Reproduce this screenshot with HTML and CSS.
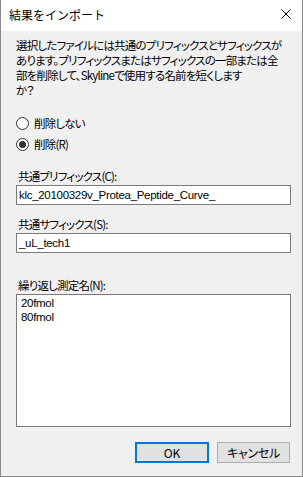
FILE: index.html
```html
<!DOCTYPE html>
<html lang="ja">
<head>
  <meta charset="UTF-8">
  <title>結果をインポート</title>
  <link rel="stylesheet" href="styles.css">
</head>
<body>
  <div class="window">
    <div class="titlebar">
      <span class="title">結果をインポート</span>
      <svg class="close" width="10" height="10" viewBox="0 0 10 10">
        <path d="M0.5 0.5 L9.5 9.5 M9.5 0.5 L0.5 9.5" stroke="#000" stroke-width="1" fill="none"/>
      </svg>
    </div>

    <div class="content">
      <div class="message">
        <span>選択したファイルには共通のプリフィックスとサフィックスが</span>
        <span>あります。プリフィックスまたはサフィックスの一部または全</span>
        <span>部を削除して、Skylineで使用する名前を短くします</span>
        <span>か？</span>
      </div>

      <div class="radios">
        <label class="radio"><span class="dot"></span>削除しない</label>
        <label class="radio checked"><span class="dot"></span>削除(R)</label>
      </div>

      <div class="field prefix">
        <div class="label">共通プリフィックス(C):</div>
        <div class="textbox">klc_20100329v_Protea_Peptide_Curve_</div>
      </div>

      <div class="field suffix">
        <div class="label">共通サフィックス(S):</div>
        <div class="textbox">_uL_tech1</div>
      </div>

      <div class="field replicates">
        <div class="label">繰り返し測定名(N):</div>
        <div class="listbox">
          <div>20fmol</div>
          <div>80fmol</div>
        </div>
      </div>

      <div class="buttons">
        <button class="btn default">OK</button>
        <button class="btn">キャンセル</button>
      </div>
    </div>
  </div>
</body>
</html>
```

FILE: styles.css
```css
body {
  margin: 0;
  font-family: "Noto Sans CJK JP", "Liberation Sans", sans-serif;
  font-size: 12px;
  color: #000;
  background: #fff;
}

.window {
  width: 303px;
  height: 477px;
  box-sizing: border-box;
  border: 1px solid #8a8a8a;
  border-top: none;
  display: flex;
  flex-direction: column;
  background: #f0f0f0;
}

.titlebar {
  height: 31px;
  background: #fff;
  display: flex;
  align-items: center;
  justify-content: space-between;
  padding: 0 11px 0 8px;
  flex-shrink: 0;
}

.title {
  line-height: 16px;
  margin-top: -1px;
}

.close {
  margin-top: -3px;
}

.content {
  display: flex;
  flex-direction: column;
  padding: 0 12px 0 15px;
  font-size: 11.5px;
  letter-spacing: -0.8px;
  font-feature-settings: "palt";
}

.message {
  margin-top: 7px;
  line-height: 15px;
}

.message span {
  display: block;
  white-space: nowrap;
}

.radios {
  margin-top: 18px;
  display: flex;
  flex-direction: column;
  gap: 7px;
}

.radio {
  display: flex;
  align-items: center;
  height: 14px;
  line-height: 14px;
}

.dot {
  width: 11px;
  height: 11px;
  border: 1px solid #333;
  border-radius: 50%;
  background: #fff;
  margin: 0 5px 0 0;
  display: flex;
  align-items: center;
  justify-content: center;
}

.checked .dot::after {
  content: "";
  width: 7px;
  height: 7px;
  border-radius: 50%;
  background: #333;
}

.label {
  height: 14px;
  line-height: 14px;
  margin-bottom: 2px;
  padding-left: 2px;
}

.prefix {
  margin-top: 18px;
}

.suffix {
  margin-top: 12px;
}

.replicates {
  margin-top: 25px;
}

.textbox,
.listbox {
  font-family: "Liberation Sans", sans-serif;
  letter-spacing: -0.3px;
  border: 1px solid #7a7a7a;
  background: #fff;
}

.textbox {
  height: 18px;
  line-height: 18px;
  padding-left: 2px;
  width: 271px;
}

.listbox {
  height: 130px;
  padding: 1px 3px 0 4px;
  width: 266px;
  line-height: 14px;
}

.buttons {
  margin-top: 15px;
  display: flex;
  justify-content: flex-end;
  gap: 8px;
}

.btn {
  font-family: "Noto Sans CJK JP", "Liberation Sans", sans-serif;
  font-size: 12px;
  font-feature-settings: "palt";
  letter-spacing: -0.3px;
  width: 73px;
  height: 21px;
  background: #e1e1e1;
  border: 1px solid #adadad;
  padding: 0;
  color: #000;
}

.btn.default {
  width: 74px;
  border: 2px solid #0078d7;
  letter-spacing: 0;
}
```
